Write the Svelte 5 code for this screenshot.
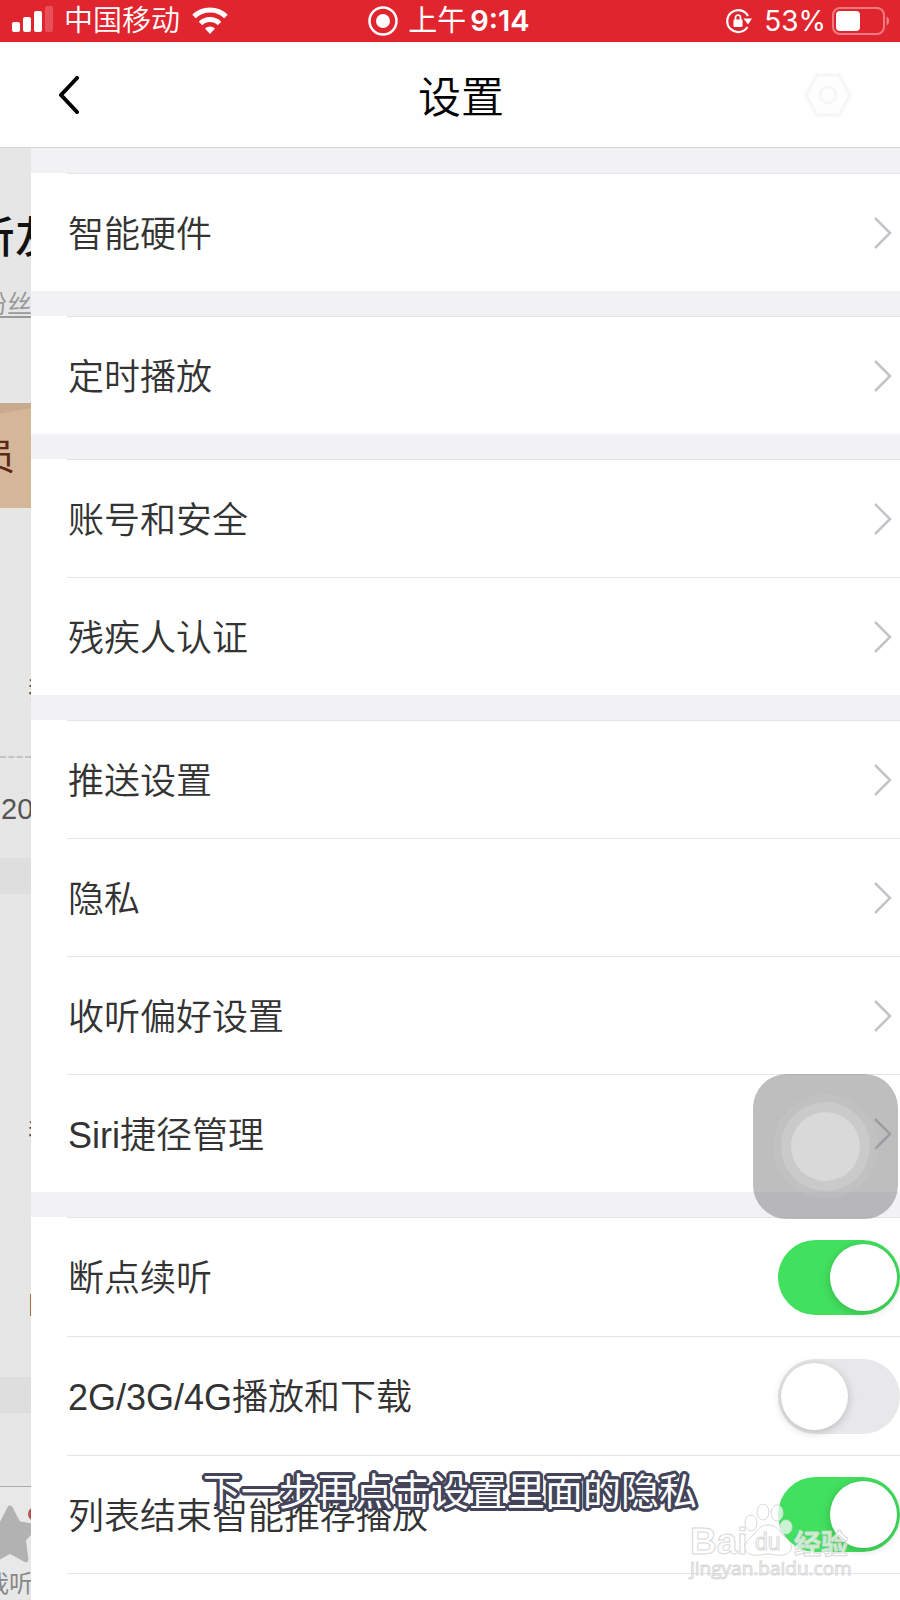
<script>
  const groups = [
    { links: ['智能硬件'] },
    { links: ['定时播放'] },
    { links: ['账号和安全', '残疾人认证'] },
    { links: ['推送设置', '隐私', '收听偏好设置', 'Siri捷径管理'] }
  ];

  let switches = $state([
    { id: 'resume', label: '断点续听', on: true },
    { id: 'cellular', label: '2G/3G/4G播放和下载', on: false },
    { id: 'recommend', label: '列表结束智能推荐播放', on: true }
  ]);
</script>

<div class="screen">
  <div class="status-bar">
    <div class="status-left">
      <svg width="42" height="24" viewBox="0 0 42 24" fill="#fff">
        <rect x="0" y="13" width="8" height="10" rx="2" />
        <rect x="11" y="8" width="8" height="15" rx="2" />
        <rect x="22" y="2" width="8" height="21" rx="2" />
        <rect x="33" y="-3" width="8" height="26" rx="2" opacity="0.2" />
      </svg>
      <span class="carrier">中国移动</span>
      <svg class="wifi" width="36" height="28" viewBox="0 0 36 28" fill="none" stroke="#fff" stroke-width="5">
        <path d="M2 9.500a23 23 0 0 1 32 0" />
        <path d="M8.500 16.500a13.500 13.500 0 0 1 19 0" />
        <path d="M18 27l-5-5.500a7.500 7.500 0 0 1 10 0z" fill="#fff" stroke="none" />
      </svg>
    </div>
    <div class="status-time">
      <svg width="30" height="30" viewBox="0 0 30 30">
        <circle cx="15" cy="15" r="13.500" fill="none" stroke="#fff" stroke-width="2.500" />
        <circle cx="15" cy="15" r="7" fill="#fff" />
      </svg>
      <span>上午<b>9:14</b></span>
    </div>
    <div class="status-right">
      <svg width="26" height="26" viewBox="0 0 26 26">
        <path d="M22 8A11 11 0 1 0 21.500 19" fill="none" stroke="#fff" stroke-width="2.200" />
        <path d="M17.500 10.500h8.500l-4 6z" fill="#fff" />
        <rect x="7.500" y="11.500" width="9" height="7.500" rx="1" fill="#fff" />
        <path d="M9.500 12v-2.500a2.500 2.500 0 0 1 5 0V12" fill="none" stroke="#fff" stroke-width="1.700" />
      </svg>
      <span>53%</span>
      <svg class="battery" width="58" height="28" viewBox="0 0 58 28">
        <rect x="1" y="1" width="51" height="26" rx="7" fill="none" stroke="#fff" stroke-width="2" opacity="0.4" />
        <rect x="4" y="4" width="24" height="20" rx="4" fill="#fff" />
        <path d="M54.500 9.500c3.500 1.500 3.500 7.500 0 9z" fill="#fff" opacity="0.4" />
      </svg>
    </div>
  </div>

  <header>
    <button class="back" aria-label="返回">
      <svg width="22" height="38" viewBox="0 0 22 38" fill="none" stroke="#000" stroke-width="4" stroke-linecap="round" stroke-linejoin="round">
        <path d="M19 2L3 19l16 17" />
      </svg>
    </button>
    <h1>设置</h1>
    <svg class="gear" width="48" height="44" viewBox="0 0 48 44" fill="none" stroke="#f6f6f6" stroke-width="3" stroke-linejoin="round">
      <path d="M13 2h22l11 20-11 20H13L2 22z" />
      <circle cx="24" cy="22" r="8" />
    </svg>
  </header>

  <div class="body">
    <aside class="under">
      <div class="profile">
        <strong>听友</strong>
        <u>粉丝</u>
      </div>
      <div class="vip"><span>会员</span></div>
      <div class="menu first"><span>我</span></div>
      <div class="date"><span>20</span></div>
      <div class="menu second">
        <span>我</span>
        <span>巨</span>
      </div>
      <div class="tab">
        <i class="dot"></i>
        <svg width="60" height="58" viewBox="0 0 60 58" fill="#b2b2b2" stroke="#b2b2b2" stroke-width="5" stroke-linejoin="round">
          <path d="M30 3l8.200 15.700 17.500 3-12.400 12.600 2.600 20.500L30 46l-15.900 8.800 2.600-20.500L4.300 21.700l17.500-3z" />
        </svg>
        <span>我听</span>
      </div>
    </aside>

    <main>
      {#each groups as group}
        <ul>
          {#each group.links as label}
            <li>
              <a href="#settings" class="row">
                <span class="text">{label}</span>
                <svg width="18" height="34" viewBox="0 0 18 34" fill="none" stroke="#c4c4c8" stroke-width="2.500">
                  <path d="M1 2l15 15L1 32" />
                </svg>
              </a>
            </li>
          {/each}
        </ul>
      {/each}
      <ul class="last">
        {#each switches as item}
          <li>
            <div class="row toggle-row">
              <label class="text" for={item.id}>{item.label}</label>
              <input type="checkbox" role="switch" id={item.id} bind:checked={item.on} />
            </div>
          </li>
        {/each}
      </ul>
    </main>
  </div>

  <button class="assistive" aria-label="辅助触控"><span></span></button>

  <p class="caption">下一步再点击设置里面的隐私</p>

  <div class="watermark">
    <svg width="168" height="80" viewBox="0 0 168 80" fill="#fff" fill-opacity="0.7" stroke="#d8d8d8" stroke-width="1">
      <text x="2" y="50" class="wm-bai">Bai</text>
      <ellipse cx="63" cy="19" rx="6" ry="8" />
      <ellipse cx="75" cy="8" rx="6" ry="8" />
      <ellipse cx="89" cy="9" rx="6" ry="8" />
      <ellipse cx="98" cy="23" rx="6" ry="7" />
      <path d="M80 21c10 0 12 8 18 13 9 7 6 16-3 17-5 1-10-1-15-1s-10 2-15 1c-9-1-11-10-3-17 7-5 8-13 18-13z" />
      <text x="67" y="46" class="wm-du">du</text>
      <text x="106" y="50" class="wm-jy">经验</text>
      <text x="2" y="71" class="wm-url">jingyan.baidu.com</text>
    </svg>
  </div>
</div>

<style>
  :global(body) {
    margin: 0;
    background: #fff;
  }

  .screen {
    position: relative;
    overflow: hidden;
    background: #fff;
    font-family: 'Liberation Sans', 'Noto Sans CJK SC', sans-serif;
    color: #333;
  }

  .status-bar {
    display: grid;
    grid-template-columns: 1fr auto 1fr;
    align-items: center;
    height: 42px;
    padding: 0 10px 0 12px;
    background: #e1252f;
    color: #fff;
    font-size: 29px;
    line-height: 40px;
  }

  .status-left,
  .status-time,
  .status-right {
    display: flex;
    align-items: center;
    height: 36px;
  }

  .status-left svg,
  .status-time svg {
    overflow: visible;
  }

  .carrier {
    margin: 0 12px 0 10px;
    font-weight: 350;
  }

  .status-time {
    gap: 10px;
    margin-right: 4px;
  }

  .status-time b {
    margin-left: 4px;
    font-family: Inter, sans-serif;
    font-size: 29px;
    font-weight: 600;
  }

  .status-right {
    justify-content: flex-end;
    font-family: Inter, sans-serif;
    font-size: 28px;
  }

  .status-right span {
    margin: 0 6px 0 12px;
  }

  header {
    display: flex;
    align-items: center;
    height: 105px;
    padding: 0 48px 0 44px;
    border-bottom: 1px solid #d4d4d6;
    background: #fefefe;
  }

  .back {
    display: flex;
    align-items: center;
    width: 48px;
    height: 48px;
    padding: 0 14px;
    border: 0;
    background: none;
  }

  .back svg {
    flex: none;
  }

  h1 {
    flex: 1;
    margin: 0;
    padding: 6px 0 0 26px;
    color: #000;
    font-size: 43px;
    font-weight: 350;
    line-height: 60px;
    text-align: center;
  }

  .body {
    display: grid;
    grid-template-columns: 31px 1fr;
  }

  /* sliver of the previous page left uncovered by the settings panel */
  .under {
    display: flex;
    flex-direction: column;
    overflow: hidden;
    background: #e6e6e6;
    white-space: nowrap;
  }

  .under > div {
    display: flex;
    flex-direction: column;
    flex: none;
  }

  .profile {
    height: 255px;
    align-items: flex-start;
  }

  .profile strong {
    margin: 60px 0 0 -28px;
    color: #111;
    font-size: 43px;
    font-weight: 500;
    line-height: 60px;
  }

  .profile u {
    margin: 18px 0 0 -18px;
    color: #999;
    font-size: 25px;
    line-height: 36px;
    text-underline-offset: 3px;
  }

  .vip {
    height: 105px;
    background: linear-gradient(170deg, #c8aa8d 10px, #d6b699 11px);
    color: #5a2718;
    font-size: 36px;
    line-height: 110px;
  }

  .vip span {
    margin-left: -57px;
  }

  .menu span {
    margin-left: 28px;
    color: #444;
    font-size: 26px;
    line-height: 36px;
  }

  .first {
    height: 248px;
    border-bottom: 2px dashed #c4c4c4;
  }

  .first span {
    margin-top: 164px;
  }

  .date {
    height: 100px;
    border-bottom: 36px solid #dedede;
    font-size: 29px;
    line-height: 102px;
    color: #555;
  }

  .date span {
    margin-left: 1px;
  }

  .second {
    height: 483px;
    border-bottom: 36px solid #dedede;
  }

  .second span:first-child {
    margin-top: 220px;
  }

  .second span:last-child {
    margin-top: 138px;
    margin-left: 26px;
  }

  .tab {
    position: relative;
    margin-top: 73px;
    height: 112px;
    border-top: 1px solid #aaa;
    background: #e8e8e8;
    color: #888;
    font-size: 24px;
    line-height: 30px;
  }

  .tab svg {
    flex: none;
    margin: 18px 0 0 -20px;
  }

  .tab span {
    margin: 6px 0 0 -15px;
  }

  .dot {
    position: absolute;
    top: 20px;
    left: 28px;
    width: 14px;
    height: 14px;
    border-radius: 50%;
    background: #b5544d;
  }

  main {
    background: #f2f2f4;
  }

  ul {
    margin: 25px 0 0;
    padding: 0;
    background: #fff;
    list-style: none;
  }

  li {
    padding-left: 36px;
  }

  .row {
    display: flex;
    align-items: center;
    justify-content: space-between;
    height: 118px;
    box-sizing: border-box;
    padding: 0 8px 0 1px;
    border-top: 1px solid #e4e4e6;
    color: #333;
    font-size: 36px;
    font-weight: 350;
    line-height: 52px;
    text-decoration: none;
  }

  .text {
    padding-top: 4px;
  }

  .toggle-row {
    height: 119px;
    padding-right: 0;
  }

  .last {
    padding-bottom: 26px;
  }

  .last li:last-child .row {
    border-bottom: 1px solid #e4e4e6;
  }

  input {
    appearance: none;
    flex: none;
    width: 122px;
    height: 75px;
    margin: 0;
    padding: 4px 3px;
    border-radius: 38px;
    background: #e8e8ea;
  }

  input::before {
    content: '';
    display: block;
    width: 67px;
    height: 67px;
    border-radius: 50%;
    background: #fff;
    box-shadow: 0 2px 10px rgba(0, 0, 0, 0.2);
  }

  input:checked {
    background: #42e05f;
  }

  input:checked::before {
    margin-left: auto;
  }

  .assistive {
    position: absolute;
    right: 2px;
    bottom: 381px;
    display: flex;
    align-items: center;
    justify-content: center;
    width: 145px;
    height: 145px;
    padding: 0;
    border: 0;
    border-radius: 34px;
    background: rgba(110, 110, 114, 0.45);
  }

  .assistive span {
    width: 69px;
    height: 69px;
    border-radius: 50%;
    background: #d9d9d9;
    box-shadow:
      0 0 0 10px rgba(255, 255, 255, 0.15),
      0 0 0 18px rgba(255, 255, 255, 0.06);
  }

  .caption {
    position: absolute;
    left: 0;
    right: 0;
    bottom: 80px;
    margin: 0;
    color: #fff;
    font-size: 38px;
    font-weight: 400;
    line-height: 56px;
    text-align: center;
    text-shadow:
      3px 0 #434459,
      -3px 0 #434459,
      0 3px #434459,
      0 -3px #434459,
      2px 2px #434459,
      -2px 2px #434459,
      2px -2px #434459,
      -2px -2px #434459,
      3px 1px #434459,
      3px -1px #434459,
      -3px 1px #434459,
      -3px -1px #434459,
      1px 3px #434459,
      -1px 3px #434459,
      1px -3px #434459,
      -1px -3px #434459;
  }

  .watermark {
    position: absolute;
    right: 44px;
    bottom: 16px;
    height: 80px;
    pointer-events: none;
  }

  .wm-bai {
    font-size: 37px;
    font-weight: 700;
  }

  .wm-du {
    font-size: 23px;
  }

  .wm-jy {
    font-size: 27px;
    font-weight: 700;
  }

  .wm-url {
    font-family: 'Open Sans', sans-serif;
    font-size: 19px;
  }
</style>
